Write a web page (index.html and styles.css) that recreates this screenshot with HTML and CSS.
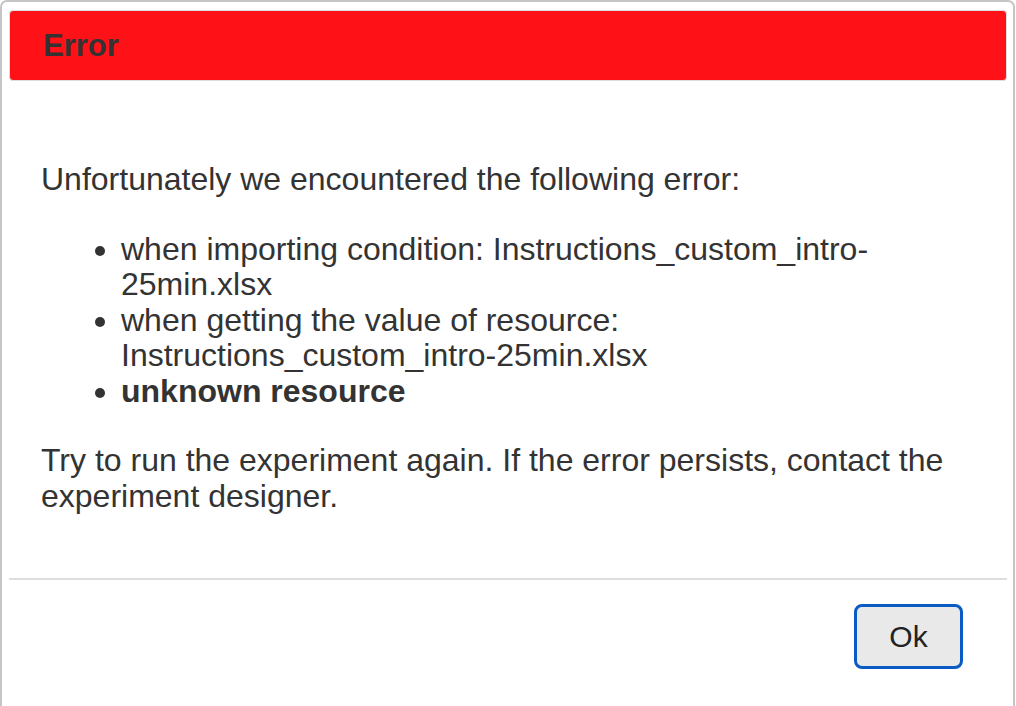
FILE: index.html
```html
<!DOCTYPE html>
<html>
    <head>
        <link rel="stylesheet" href="styles.css">
    </head>
    <body>
        <div class="dialog">
            <div class="titlebar">
                <span class="title">Error</span>
            </div>
            <div class="content">
                <p>Unfortunately we encountered the following error:</p>
                <ul>
                    <li>when importing condition: Instructions_custom_intro-25min.xlsx</li>
                    <li>when getting the value of resource: Instructions_custom_intro-25min.xlsx</li>
                    <li><strong>unknown resource</strong></li>
                </ul>
                <p>Try to run the experiment again. If the error persists, contact the experiment designer.</p>
            </div>
            <div class="buttonpane">
                <button class="ok">Ok</button>
            </div>
        </div>
    </body>
</html>
```

FILE: styles.css
```css
body {
    margin: 0;
    background: #fff;
    overflow: hidden;
    font-family: "Liberation Sans", Arial, sans-serif;
    color: #333;
}
.dialog {
    width: 1015px;
    height: 740px;
    box-sizing: border-box;
    border: 2px solid #c5c5c5;
    border-radius: 7px;
    padding: 8px 6px 6px 7px;
    background: #fff;
}
.titlebar {
    height: 71px;
    box-sizing: border-box;
    background: #ff1118;
    border: 1px solid #dddddd;
    border-radius: 4px;
    display: flex;
    align-items: center;
    padding-left: 33px;
}
.title {
    font-weight: bold;
    font-size: 31px;
    color: #333;
}
.content {
    padding: 81px 32px 40px 32px;
    font-size: 32px;
    line-height: 35.5px;
    height: 497px;
    box-sizing: border-box;
}
.content p {
    margin: 0;
}
.content ul {
    margin: 34px 0 34px 0;
    padding-left: 80px;
}
.buttonpane {
    border-top: 2px solid #dddddd;
    display: flex;
    justify-content: flex-end;
    padding: 24px 44px 0 0;
}
.ok {
    width: 109px;
    height: 65px;
    box-sizing: border-box;
    border: 3px solid #0a5bc4;
    border-radius: 8px;
    background: #e9e9e9;
    font-family: "Liberation Sans", Arial, sans-serif;
    font-size: 30px;
    color: #222;
}
```
